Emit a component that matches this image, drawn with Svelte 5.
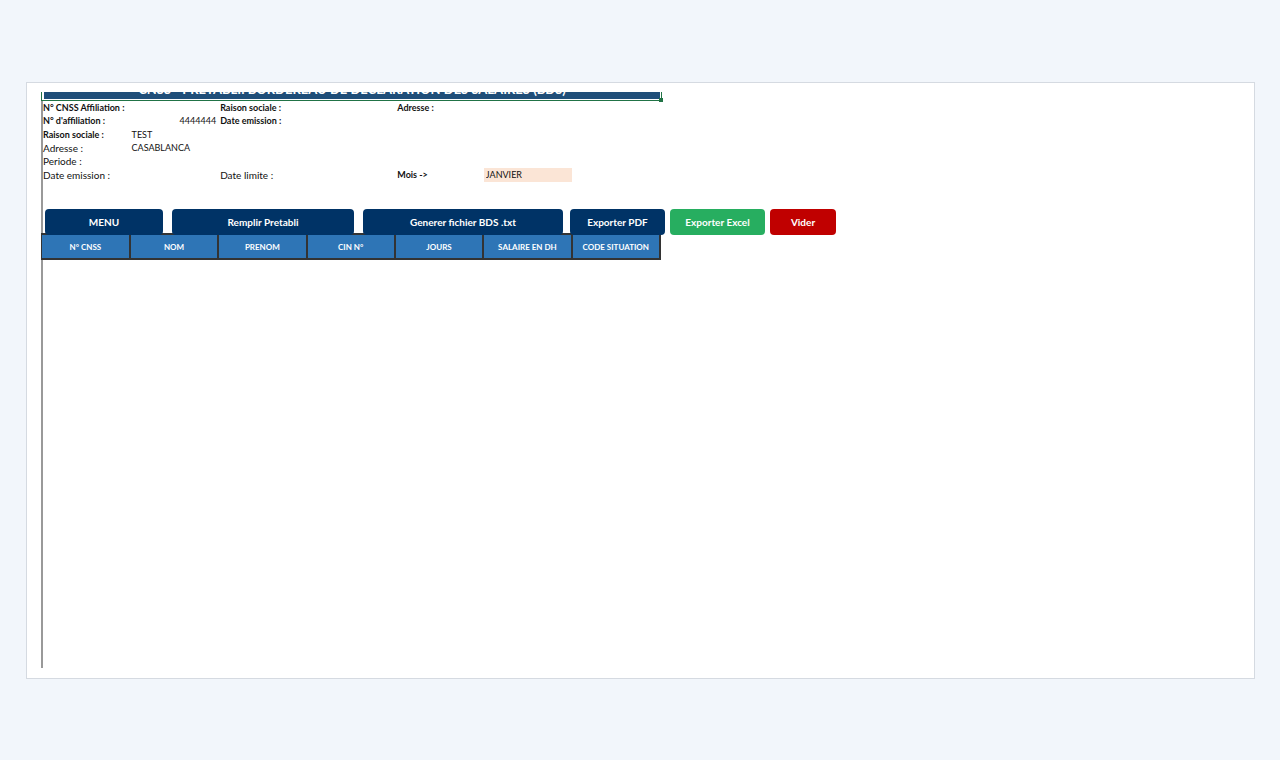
<script lang="ts">
  type Cell = { text: string; bold?: boolean; value?: boolean; right?: boolean };

  const rows: Cell[][] = [
    [
      { text: "N° CNSS Affiliation :", bold: true },
      { text: "" },
      { text: "Raison sociale :", bold: true },
      { text: "" },
      { text: "Adresse :", bold: true },
    ],
    [
      { text: "N° d'affiliation :", bold: true },
      { text: "4444444", value: true, right: true },
      { text: "Date emission :", bold: true },
    ],
    [{ text: "Raison sociale :", bold: true }, { text: "TEST", value: true }],
    [{ text: "Adresse :" }, { text: "CASABLANCA", value: true }],
    [{ text: "Periode :" }],
  ];

  const columns = ["N° CNSS", "NOM", "PRENOM", "CIN N°", "JOURS", "SALAIRE EN DH", "CODE SITUATION"];

  let mois = $state("JANVIER");
</script>

<main class="page">
  <section class="card">
    <div class="sheet">
      <div class="title">
        <h1>CNSS - PRETABLI: BORDEREAU DE DECLARATION DES SALAIRES (BDS)</h1>
        <span class="handle"></span>
      </div>

      <div class="info">
        {#each rows as row}
          <div class="line">
            {#each row as cell}
              <span class:bold={cell.bold} class:value={cell.value} class:right={cell.right}>{cell.text}</span>
            {/each}
          </div>
        {/each}
        <div class="line">
          <span>Date emission :</span>
          <span></span>
          <span>Date limite :</span>
          <span></span>
          <label class="bold" for="mois">Mois -&gt;</label>
          <input id="mois" bind:value={mois} />
        </div>
      </div>

      <div class="actions">
        <div class="group">
          <button class="menu">MENU</button>
          <button class="fill">Remplir Pretabli</button>
          <button class="bds">Generer fichier BDS .txt</button>
        </div>
        <div class="group exports">
          <button>Exporter PDF</button>
          <button class="excel">Exporter Excel</button>
          <button class="clear">Vider</button>
        </div>
      </div>

      <table>
        <thead>
          <tr>
            {#each columns as col}
              <th scope="col">{col}</th>
            {/each}
          </tr>
        </thead>
      </table>
    </div>
  </section>
</main>

<style>
  :global(body) {
    margin: 0;
    background: #f2f6fb;
  }
  .page {
    box-sizing: border-box;
    display: flex;
    min-height: 100vh;
    padding: 82px 25px 81px 26px;
    font-family: Lato, "Liberation Sans", sans-serif;
    font-size: 10px;
    color: #111;
  }
  .card {
    flex: 1;
    display: flex;
    padding: 9px 14px 10px;
    background: #fff;
    border: 1px solid #d5dae1;
  }
  .sheet {
    flex: 1;
    background: linear-gradient(#999, #999) no-repeat left / 2px 100%;
  }
  .title {
    position: relative;
    box-sizing: border-box;
    width: 621px;
    height: 9px;
    padding: 0 1px 1px 2px;
    border: solid #217346;
    border-width: 0 1px 1px;
    background: #fff;
  }
  /* only the bottom edge of the scrolled title row is visible */
  h1 {
    box-sizing: border-box;
    display: flex;
    align-items: flex-end;
    justify-content: center;
    height: 7px;
    margin: 0;
    padding-bottom: 2px;
    overflow: hidden;
    background: #1f4e79;
    color: #fff;
    font-size: 13px;
    line-height: 16px;
    white-space: nowrap;
  }
  .handle {
    position: absolute;
    right: -2px;
    bottom: -2px;
    width: 4px;
    height: 4px;
    background: #217346;
  }
  .info {
    display: grid;
    grid-auto-rows: 1fr;
    width: 620px;
    height: 80px;
    margin-bottom: 28px;
  }
  .line {
    display: grid;
    grid-template-columns: repeat(7, 1fr);
    line-height: 14px;
    min-height: 0;
    white-space: nowrap;
  }
  .line > * {
    padding: 0 2px;
  }
  .bold {
    font-size: 9px;
    font-weight: 700;
  }
  .value {
    font-size: 9px;
  }
  .right {
    text-align: right;
  }
  input {
    box-sizing: border-box;
    width: 100%;
    height: 14px;
    border: 0;
    background: #fbe5d6;
    color: inherit;
    font: inherit;
    font-size: 9px;
  }
  .actions {
    position: relative;
    display: flex;
    gap: 7px;
    margin: 0 0 -2px 4px;
  }
  .group {
    display: flex;
    gap: 9px;
  }
  .exports {
    gap: 5px;
  }
  button {
    width: 95px;
    height: 26px;
    padding: 0;
    border: 0;
    border-radius: 4px;
    background: #003366;
    color: #fff;
    font: inherit;
    font-weight: 700;
  }
  .menu {
    width: 118px;
  }
  .fill {
    width: 182px;
  }
  .bds {
    width: 200px;
  }
  .excel {
    background: #27ae60;
  }
  .clear {
    width: 66px;
    background: #c00000;
  }
  table {
    width: 620px;
    table-layout: fixed;
    border-collapse: collapse;
  }
  th {
    height: 23px;
    padding: 0;
    border: 2px solid #333;
    border-left-width: 1px;
    background: #2e75b6;
    color: #fff;
    font-size: 8px;
    font-weight: 700;
  }
</style>
